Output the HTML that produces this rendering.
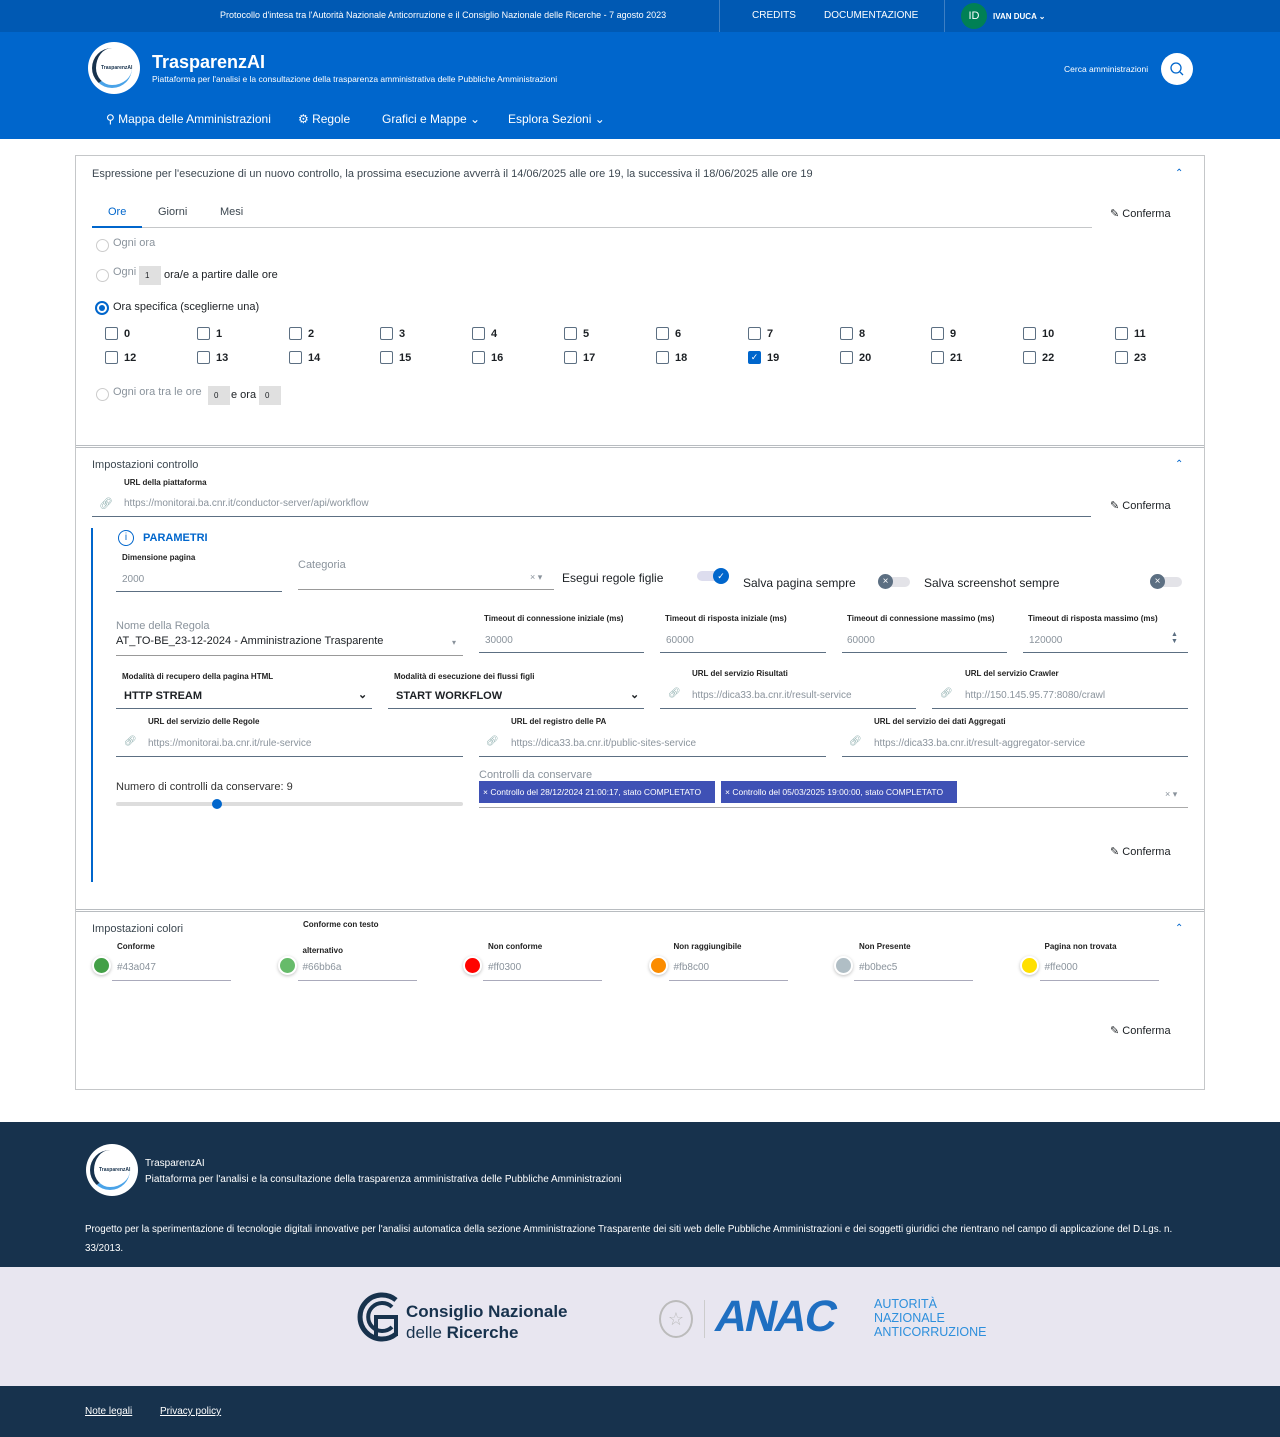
<!DOCTYPE html>
<html><head><meta charset="utf-8"><style>
*{box-sizing:border-box;margin:0;padding:0}
body{width:1280px;height:1437px;position:relative;font-family:"Liberation Sans",sans-serif;color:#1c2024;background:#fff;overflow:hidden}
.a{position:absolute;white-space:nowrap}
.top{left:0;top:0;width:1280px;height:32px;background:#0059b3}
.hdr{left:0;top:32px;width:1280px;height:107px;background:#0066cc}
.w{color:#fff}
.card{left:75px;top:155px;width:1130px;height:935px;border:1px solid #c5c7c9}
.sep{left:76px;width:1128px;height:3px;border-top:1px solid #b8bcc0;border-bottom:1px solid #b8bcc0}
.t11{font-size:11px}
.t12{font-size:12px}
.lab{font-size:8px;font-weight:bold;color:#222}
.ul{height:1px;background:#5c6f82}
.gray{color:#8a939c}
.cb{width:13px;height:13px;border:1.5px solid #5c6f82;border-radius:2px;background:#fff}
.rad{width:13px;height:13px;border:1px solid #ccc;border-radius:50%}
.conf{font-size:11px;color:#1c2024}
.chip{background:#3f51b5;color:#fff;font-size:8.5px;height:22px;line-height:22px;padding:0 4px}
.dot{width:15px;height:15px;border-radius:50%;box-shadow:0 0 0 2px #fff,0 1px 3px 2px rgba(0,0,0,.25)}
</style></head><body>
<div class="a top"></div>
<div class="a w" style="left:220px;top:10px;font-size:9px">Protocollo d'intesa tra l'Autorità Nazionale Anticorruzione e il Consiglio Nazionale delle Ricerche - 7 agosto 2023</div>
<div class="a" style="left:719px;top:0;width:1px;height:32px;background:#3d7fc4"></div>
<div class="a" style="left:944px;top:0;width:1px;height:32px;background:#3d7fc4"></div>
<div class="a w" style="left:752px;top:10px;font-size:10px">CREDITS</div>
<div class="a w" style="left:824px;top:10px;font-size:10px">DOCUMENTAZIONE</div>
<div class="a w" style="left:961px;top:3px;width:26px;height:26px;border-radius:50%;background:#008055;font-size:11px;text-align:center;line-height:26px">ID</div>
<div class="a w" style="left:993px;top:12px;font-size:8px;font-weight:bold">IVAN DUCA &#8964;</div>
<div class="a hdr"></div>
<div class="a" style="left:88px;top:42px;width:52px;height:52px;border-radius:50%;background:#fff;overflow:hidden">
<div class="a" style="left:4px;top:6px;width:40px;height:40px;border-radius:50%;border-left:4px solid #17324d;border-bottom:3px solid #4aa3e8"></div>
<div class="a" style="left:13px;top:23px;font-size:5px;color:#17324d;font-weight:bold">TrasparenzAI</div></div>
<div class="a w" style="left:152px;top:52px;font-size:18px;font-weight:bold">TrasparenzAI</div>
<div class="a w" style="left:152px;top:74px;font-size:8.5px">Piattaforma per l'analisi e la consultazione della trasparenza amministrativa delle Pubbliche Amministrazioni</div>
<div class="a w" style="left:1064px;top:64px;font-size:8.5px">Cerca amministrazioni</div>
<div class="a" style="left:1161px;top:53px;width:32px;height:32px;border-radius:50%;background:#fff">
<svg width="32" height="32"><circle cx="15" cy="15" r="5" fill="none" stroke="#0066cc" stroke-width="1.3"/><line x1="19" y1="19" x2="22" y2="22" stroke="#0066cc" stroke-width="1.3"/></svg></div>
<div class="a w" style="left:106px;top:112px;font-size:12px">&#9906; Mappa delle Amministrazioni</div>
<div class="a w" style="left:298px;top:112px;font-size:12px">&#9881; Regole</div>
<div class="a w" style="left:382px;top:112px;font-size:12px">Grafici e Mappe &#8964;</div>
<div class="a w" style="left:508px;top:112px;font-size:12px">Esplora Sezioni &#8964;</div>

<div class="a card"></div>
<div class="a t11" style="left:92px;top:168px;color:#3c4750">Espressione per l'esecuzione di un nuovo controllo, la prossima esecuzione avverrà il 14/06/2025 alle ore 19, la successiva il 18/06/2025 alle ore 19</div>
<div class="a" style="left:1175px;top:168px;font-size:10px;color:#0066cc">&#8963;</div>
<div class="a t11" style="left:108px;top:206px;color:#0066cc">Ore</div>
<div class="a t11" style="left:158px;top:206px;color:#3c4750">Giorni</div>
<div class="a t11" style="left:220px;top:206px;color:#3c4750">Mesi</div>
<div class="a" style="left:92px;top:227px;width:1000px;height:1px;background:#c5c7c9"></div>
<div class="a" style="left:92px;top:226px;width:50px;height:2px;background:#0066cc"></div>
<div class="a conf" style="left:1110px;top:207px">&#9998; Conferma</div>
<div class="a rad" style="left:96px;top:239px"></div><div class="a t11 gray" style="left:113px;top:237px">Ogni ora</div>
<div class="a rad" style="left:96px;top:269px"></div><div class="a t11 gray" style="left:113px;top:266px">Ogni</div>
<div class="a" style="left:139px;top:266px;width:22px;height:19px;background:#e0e0e0;font-size:8px;padding:5px 6px">1</div>
<div class="a t11" style="left:164px;top:269px">ora/e a partire dalle ore</div>
<div class="a" style="left:95px;top:301px;width:14px;height:14px;border-radius:50%;border:2px solid #0066cc;padding:2px"><div style="width:6px;height:6px;border-radius:50%;background:#0066cc"></div></div>
<div class="a t11" style="left:113px;top:301px">Ora specifica (sceglierne una)</div>
<div id="cbs"></div>
<div class="a rad" style="left:96px;top:388px"></div><div class="a t11 gray" style="left:113px;top:386px">Ogni ora tra le ore</div>
<div class="a" style="left:208px;top:386px;width:22px;height:19px;background:#e0e0e0;font-size:8px;padding:5px 6px">0</div>
<div class="a t11" style="left:231px;top:389px">e ora</div>
<div class="a" style="left:259px;top:386px;width:22px;height:19px;background:#e0e0e0;font-size:8px;padding:5px 6px">0</div>

<div class="a sep" style="top:445px"></div>
<div class="a t11" style="left:92px;top:459px;color:#3c4750">Impostazioni controllo</div>
<div class="a" style="left:1175px;top:459px;font-size:10px;color:#0066cc">&#8963;</div>
<div class="a lab" style="left:124px;top:478px">URL della piattaforma</div>
<div class="a" style="left:99px;top:497px;font-size:11px;color:#8aa">&#128279;&#xFE0E;</div>
<div class="a gray" style="left:124px;top:498px;font-size:10px">https://monitorai.ba.cnr.it/conductor-server/api/workflow</div>
<div class="a ul" style="left:92px;top:516px;width:999px"></div>
<div class="a conf" style="left:1110px;top:499px">&#9998; Conferma</div>
<div class="a" style="left:91px;top:528px;width:2px;height:354px;background:#0066cc"></div>
<div class="a" style="left:118px;top:530px;width:16px;height:16px;border-radius:50%;border:1.3px solid #0066cc;color:#0066cc;font-size:10px;text-align:center;line-height:14px">i</div>
<div class="a" style="left:143px;top:532px;font-size:11px;font-weight:bold;color:#0066cc">PARAMETRI</div>
<div class="a lab" style="left:122px;top:553px">Dimensione pagina</div>
<div class="a gray" style="left:122px;top:574px;font-size:10px">2000</div>
<div class="a ul" style="left:116px;top:591px;width:166px"></div>
<div class="a gray" style="left:298px;top:559px;font-size:11px">Categoria</div>
<div class="a gray" style="left:530px;top:572px;font-size:9px">× &#9662;</div>
<div class="a ul" style="left:298px;top:589px;width:256px;background:#999"></div>
<div class="a t12" style="left:562px;top:571px">Esegui regole figlie</div>
<div class="a" style="left:697px;top:571px;width:30px;height:10px;border-radius:5px;background:#dde"></div>
<div class="a" style="left:713px;top:568px;width:16px;height:16px;border-radius:50%;background:#0066cc;color:#fff;font-size:9px;text-align:center;line-height:16px">&#10003;</div>
<div class="a t12" style="left:743px;top:576px">Salva pagina sempre</div>
<div class="a" style="left:878px;top:577px;width:32px;height:10px;border-radius:5px;background:#e3e3e8"></div>
<div class="a" style="left:878px;top:574px;width:15px;height:15px;border-radius:50%;background:#5c6f82;color:#fff;font-size:10px;text-align:center;line-height:15px">×</div>
<div class="a t12" style="left:924px;top:576px">Salva screenshot sempre</div>
<div class="a" style="left:1150px;top:577px;width:32px;height:10px;border-radius:5px;background:#e3e3e8"></div>
<div class="a" style="left:1150px;top:574px;width:15px;height:15px;border-radius:50%;background:#5c6f82;color:#fff;font-size:10px;text-align:center;line-height:15px">×</div>

<div class="a gray" style="left:116px;top:620px;font-size:11px">Nome della Regola</div>
<div class="a" style="left:116px;top:635px;font-size:11px">AT_TO-BE_23-12-2024 - Amministrazione Trasparente</div>
<div class="a gray" style="left:452px;top:638px;font-size:8px">&#9662;</div>
<div class="a ul" style="left:116px;top:655px;width:347px;background:#999"></div>
<div class="a lab" style="left:484px;top:614px">Timeout di connessione iniziale (ms)</div>
<div class="a gray" style="left:485px;top:635px;font-size:10px">30000</div>
<div class="a ul" style="left:479px;top:652px;width:165px"></div>
<div class="a lab" style="left:665px;top:614px">Timeout di risposta iniziale (ms)</div>
<div class="a gray" style="left:666px;top:635px;font-size:10px">60000</div>
<div class="a ul" style="left:660px;top:652px;width:166px"></div>
<div class="a lab" style="left:847px;top:614px">Timeout di connessione massimo (ms)</div>
<div class="a gray" style="left:847px;top:635px;font-size:10px">60000</div>
<div class="a ul" style="left:842px;top:652px;width:165px"></div>
<div class="a lab" style="left:1028px;top:614px">Timeout di risposta massimo (ms)</div>
<div class="a gray" style="left:1029px;top:635px;font-size:10px">120000</div>
<div class="a" style="left:1171px;top:631px;font-size:7px;line-height:7px;color:#5c6f82">&#9650;<br>&#9660;</div>
<div class="a ul" style="left:1023px;top:652px;width:165px"></div>

<div class="a lab" style="left:122px;top:672px">Modalità di recupero della pagina HTML</div>
<div class="a" style="left:124px;top:690px;font-size:11px;font-weight:bold">HTTP STREAM</div>
<div class="a" style="left:358px;top:688px;font-size:11px;font-weight:bold">&#8964;</div>
<div class="a ul" style="left:116px;top:708px;width:256px"></div>
<div class="a lab" style="left:394px;top:672px">Modalità di esecuzione dei flussi figli</div>
<div class="a" style="left:396px;top:690px;font-size:11px;font-weight:bold">START WORKFLOW</div>
<div class="a" style="left:630px;top:688px;font-size:11px;font-weight:bold">&#8964;</div>
<div class="a ul" style="left:388px;top:708px;width:256px"></div>
<div class="a lab" style="left:692px;top:669px">URL del servizio Risultati</div>
<div class="a" style="left:668px;top:688px;font-size:10px;color:#8aa">&#128279;&#xFE0E;</div>
<div class="a gray" style="left:692px;top:690px;font-size:10px">https://dica33.ba.cnr.it/result-service</div>
<div class="a ul" style="left:660px;top:708px;width:256px"></div>
<div class="a lab" style="left:965px;top:669px">URL del servizio Crawler</div>
<div class="a" style="left:940px;top:688px;font-size:10px;color:#8aa">&#128279;&#xFE0E;</div>
<div class="a gray" style="left:965px;top:690px;font-size:10px">http://150.145.95.77:8080/crawl</div>
<div class="a ul" style="left:932px;top:708px;width:256px"></div>

<div class="a lab" style="left:148px;top:717px">URL del servizio delle Regole</div>
<div class="a" style="left:124px;top:736px;font-size:10px;color:#8aa">&#128279;&#xFE0E;</div>
<div class="a gray" style="left:148px;top:738px;font-size:10px">https://monitorai.ba.cnr.it/rule-service</div>
<div class="a ul" style="left:116px;top:756px;width:347px"></div>
<div class="a lab" style="left:511px;top:717px">URL del registro delle PA</div>
<div class="a" style="left:486px;top:736px;font-size:10px;color:#8aa">&#128279;&#xFE0E;</div>
<div class="a gray" style="left:511px;top:738px;font-size:10px">https://dica33.ba.cnr.it/public-sites-service</div>
<div class="a ul" style="left:479px;top:756px;width:347px"></div>
<div class="a lab" style="left:874px;top:717px">URL del servizio dei dati Aggregati</div>
<div class="a" style="left:849px;top:736px;font-size:10px;color:#8aa">&#128279;&#xFE0E;</div>
<div class="a gray" style="left:874px;top:738px;font-size:10px">https://dica33.ba.cnr.it/result-aggregator-service</div>
<div class="a ul" style="left:842px;top:756px;width:346px"></div>

<div class="a" style="left:116px;top:781px;font-size:11px;color:#333">Numero di controlli da conservare: 9</div>
<div class="a" style="left:116px;top:802px;width:347px;height:4px;border-radius:2px;background:#ddd"></div>
<div class="a" style="left:212px;top:799px;width:10px;height:10px;border-radius:50%;background:#0066cc"></div>
<div class="a gray" style="left:479px;top:769px;font-size:11px">Controlli da conservare</div>
<div class="a chip" style="left:479px;top:781px;width:236px">× Controllo del 28/12/2024 21:00:17, stato COMPLETATO</div>
<div class="a chip" style="left:721px;top:781px;width:236px">× Controllo del 05/03/2025 19:00:00, stato COMPLETATO</div>
<div class="a gray" style="left:1165px;top:789px;font-size:9px">× &#9662;</div>
<div class="a ul" style="left:479px;top:807px;width:709px;background:#aaa"></div>
<div class="a conf" style="left:1110px;top:845px">&#9998; Conferma</div>

<div class="a sep" style="top:909px"></div>
<div class="a t11" style="left:92px;top:923px;color:#3c4750">Impostazioni colori</div>
<div class="a" style="left:1175px;top:923px;font-size:10px;color:#0066cc">&#8963;</div>
<div id="cols"></div>
<div class="a conf" style="left:1110px;top:1024px">&#9998; Conferma</div>

<div class="a" style="left:0;top:1122px;width:1280px;height:145px;background:#17324d"></div>
<div class="a" style="left:86px;top:1144px;width:52px;height:52px;border-radius:50%;background:#fff;overflow:hidden">
<div class="a" style="left:4px;top:6px;width:40px;height:40px;border-radius:50%;border-left:4px solid #17324d;border-bottom:3px solid #4aa3e8"></div>
<div class="a" style="left:13px;top:23px;font-size:5px;color:#17324d;font-weight:bold">TrasparenzAI</div></div>
<div class="a w" style="left:145px;top:1158px;font-size:10px">TrasparenzAI</div>
<div class="a w" style="left:145px;top:1174px;font-size:10px">Piattaforma per l'analisi e la consultazione della trasparenza amministrativa delle Pubbliche Amministrazioni</div>
<div class="a w" style="left:85px;top:1220px;font-size:9.8px;white-space:normal;width:1110px;line-height:19px">Progetto per la sperimentazione di tecnologie digitali innovative per l'analisi automatica della sezione Amministrazione Trasparente dei siti web delle Pubbliche Amministrazioni e dei soggetti giuridici che rientrano nel campo di applicazione del D.Lgs. n. 33/2013.</div>
<div class="a" style="left:0;top:1267px;width:1280px;height:119px;background:#e8e6f0"></div>
<svg class="a" style="left:352px;top:1292px" width="50" height="50"><path d="M44 8 A22 22 0 1 0 44 42" fill="none" stroke="#17324d" stroke-width="5"/><path d="M40 15 A14 14 0 1 0 40 35" fill="none" stroke="#17324d" stroke-width="4"/><path d="M24 44 V25 H44 V44" fill="none" stroke="#17324d" stroke-width="4"/></svg>
<div class="a" style="left:406px;top:1302px;font-size:17px;font-weight:bold;color:#17324d">Consiglio Nazionale</div>
<div class="a" style="left:406px;top:1323px;font-size:17px;color:#17324d">delle <b>Ricerche</b></div>
<div class="a" style="left:659px;top:1300px;width:34px;height:38px;border-radius:50%;border:2px solid #bbb;color:#bbb;text-align:center;line-height:34px;font-size:18px">&#9734;</div>
<div class="a" style="left:704px;top:1300px;width:1px;height:38px;background:#ccc"></div>
<div class="a" style="left:716px;top:1292px;font-size:44px;font-weight:bold;color:#1f6fc1;letter-spacing:-2px;transform:skewX(-12deg)">ANAC</div>
<div class="a" style="left:874px;top:1297px;font-size:12.5px;color:#2d8fdc;line-height:14px">AUTORITÀ<br>NAZIONALE<br>ANTICORRUZIONE</div>
<div class="a" style="left:0;top:1386px;width:1280px;height:51px;background:#17324d"></div>
<div class="a w" style="left:85px;top:1406px;font-size:10px;text-decoration:underline">Note legali</div>
<div class="a w" style="left:160px;top:1406px;font-size:10px;text-decoration:underline">Privacy policy</div>
<script>
var xs=[105,197,289,380,472,564,656,748,840,931,1023,1115],h='';
for(var r=0;r<2;r++)for(var i=0;i<12;i++){var n=r*12+i,y=r?351:327,x=xs[i];
var c=n==19?'background:#0066cc;border-color:#0066cc;color:#fff;font-size:9px;line-height:10px;text-align:center':'';
h+='<div class="a cb" style="left:'+x+'px;top:'+y+'px;'+c+'">'+(n==19?'&#10003;':'')+'</div><div class="a t11" style="left:'+(x+19)+'px;top:'+(y+1)+'px;font-weight:bold">'+n+'</div>';}
document.getElementById('cbs').innerHTML=h;
var cs=[['Conforme','#43a047','#43a047'],['alternativo','#66bb6a','#66bb6a'],['Non conforme','#ff0300','#ff0300'],['Non raggiungibile','#fb8c00','#fb8c00'],['Non Presente','#b0bec5','#b0bec5'],['Pagina non trovata','#ffe000','#ffe000']];
h='<div class="a lab" style="left:303px;top:920px">Conforme con testo</div>';
for(var i=0;i<6;i++){var x=92+i*185.5;
h+='<div class="a lab" style="left:'+(x+25)+'px;top:'+(i==1?946:942)+'px">'+cs[i][0]+'</div><div class="a dot" style="left:'+(x+2)+'px;top:958px;background:'+cs[i][1]+'"></div><div class="a gray" style="left:'+(x+25)+'px;top:962px;font-size:10px">'+cs[i][2]+'</div><div class="a ul" style="left:'+(x+20)+'px;top:980px;width:119px;background:#aab"></div>';}
document.getElementById('cols').innerHTML=h;
</script>
</body></html>
